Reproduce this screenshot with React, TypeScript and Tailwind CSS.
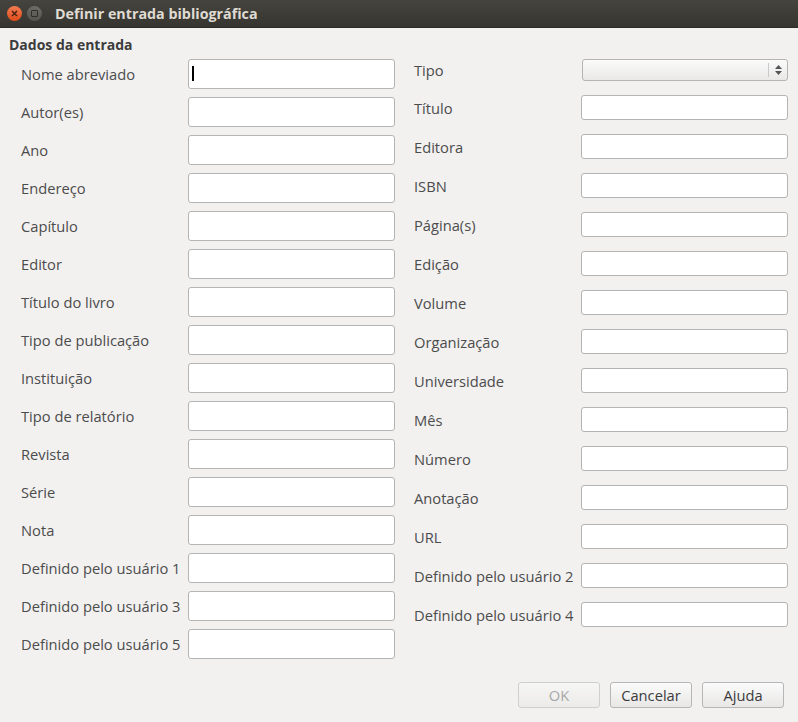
import { useState } from 'react';

const leftFields = [
  'Nome abreviado',
  'Autor(es)',
  'Ano',
  'Endereço',
  'Capítulo',
  'Editor',
  'Título do livro',
  'Tipo de publicação',
  'Instituição',
  'Tipo de relatório',
  'Revista',
  'Série',
  'Nota',
  'Definido pelo usuário 1',
  'Definido pelo usuário 3',
  'Definido pelo usuário 5',
];

const rightFields = [
  'Título',
  'Editora',
  'ISBN',
  'Página(s)',
  'Edição',
  'Volume',
  'Organização',
  'Universidade',
  'Mês',
  'Número',
  'Anotação',
  'URL',
  'Definido pelo usuário 2',
  'Definido pelo usuário 4',
];

const inputClass =
  'w-[207px] bg-white border border-[#b4b4b4] rounded-[3px] px-1 text-[14px] text-[#333] outline-none';

export default function App() {
  const [values, setValues] = useState<Record<string, string>>({});

  const update = (key: string, v: string) =>
    setValues((prev) => ({ ...prev, [key]: v }));

  return (
    <div
      className="w-[798px] h-[722px] bg-[#f2f1f0] flex flex-col overflow-hidden text-[#4c4c4c]"
      style={{ fontFamily: '"Open Sans", "Noto Sans", sans-serif' }}
    >
      {/* Title bar */}
      <div className="h-[28px] flex items-center bg-gradient-to-b from-[#45443f] to-[#36352f] border-b border-[#2b2a27]">
        <div className="ml-[7px] w-[15px] h-[15px] rounded-full bg-gradient-to-b from-[#f27b50] to-[#df4a16] flex items-center justify-center">
          <svg width="7" height="7" viewBox="0 0 7 7">
            <path d="M1 1 L6 6 M6 1 L1 6" stroke="#4a2113" strokeWidth="1.5" />
          </svg>
        </div>
        <div className="ml-[5px] w-[15px] h-[15px] rounded-full bg-gradient-to-b from-[#6c6b66] to-[#55544f] flex items-center justify-center">
          <div className="w-[7px] h-[7px] border border-[#2f2e2a] rounded-[1px]" />
        </div>
        <span className="ml-[13px] text-[14.3px] font-bold text-[#dfdbd2]">
          Definir entrada bibliográfica
        </span>
      </div>

      {/* Body */}
      <div className="flex-1 flex flex-col">
        <div className="pl-[9px] pt-[8px] text-[14px] font-bold text-[#3c3c3c] leading-[18px]">
          Dados da entrada
        </div>

        <div className="flex pt-[5px] pl-[21px] gap-[19px]">
          {/* Left column */}
          <div className="flex flex-col gap-[8px]">
            {leftFields.map((label, i) => (
              <div key={label} className="flex items-center">
                <span className="w-[167px] text-[14.7px] leading-[18px]">{label}</span>
                <div className="relative">
                  <input
                    className={`${inputClass} h-[30px]`}
                    value={values['l' + i] ?? ''}
                    onChange={(e) => update('l' + i, e.target.value)}
                  />
                  {i === 0 && (
                    <span className="absolute left-[4px] top-[7px] w-[2px] h-[15px] bg-black" />
                  )}
                </div>
              </div>
            ))}
          </div>

          {/* Right column */}
          <div className="flex flex-col gap-[14px]">
            <div className="flex items-center">
              <span className="w-[167px] text-[14.7px] leading-[18px]">Tipo</span>
              <div className="w-[206px] h-[22px] ml-[1px] rounded-[3px] border border-[#b4b4b4] bg-gradient-to-b from-[#fbfbfb] to-[#e9e8e7] flex justify-end">
                <div className="w-[19px] my-[3px] border-l border-[#c9c9c9] flex flex-col items-center justify-center gap-[2px]">
                  <svg width="7" height="4" viewBox="0 0 7 4">
                    <path d="M0 4 L3.5 0 L7 4 Z" fill="#555" />
                  </svg>
                  <svg width="7" height="4" viewBox="0 0 7 4">
                    <path d="M0 0 L3.5 4 L7 0 Z" fill="#555" />
                  </svg>
                </div>
              </div>
            </div>
            {rightFields.map((label, i) => (
              <div key={label} className="flex items-center">
                <span className="w-[167px] text-[14.7px] leading-[18px]">{label}</span>
                <input
                  className={`${inputClass} h-[25px]`}
                  value={values['r' + i] ?? ''}
                  onChange={(e) => update('r' + i, e.target.value)}
                />
              </div>
            ))}
          </div>
        </div>

        {/* Buttons */}
        <div className="mt-auto mb-[14px] pr-[14px] flex justify-end gap-[10px]">
          <button
            disabled
            className="w-[82px] h-[26px] rounded-[3px] border border-[#cfcfcf] bg-gradient-to-b from-[#f6f6f5] to-[#ecebea] text-[14.7px] text-[#a7a7a7]"
          >
            OK
          </button>
          <button className="w-[82px] h-[26px] rounded-[3px] border border-[#b6b6b6] bg-gradient-to-b from-[#fbfbfb] to-[#e8e7e6] text-[14.7px] text-[#3c3c3c]">
            Cancelar
          </button>
          <button className="w-[82px] h-[26px] rounded-[3px] border border-[#b6b6b6] bg-gradient-to-b from-[#fbfbfb] to-[#e8e7e6] text-[14.7px] text-[#3c3c3c]">
            Ajuda
          </button>
        </div>
      </div>
    </div>
  );
}
